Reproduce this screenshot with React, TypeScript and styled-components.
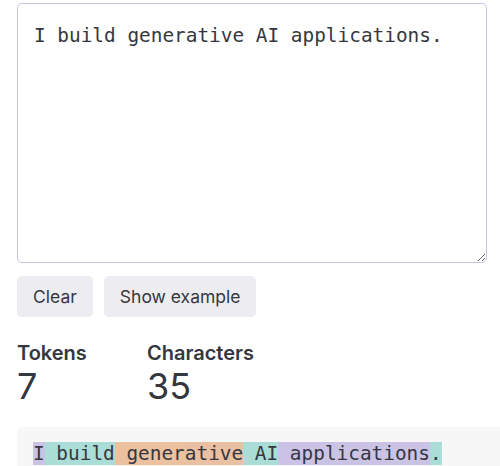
import React from "react";
import styled, { createGlobalStyle } from "styled-components";

const Global = createGlobalStyle`
  html, body { margin: 0; padding: 0; background: #ffffff; overflow: hidden; }
  body { font-family: "Inter", "Roboto", sans-serif; color: #353740; }
`;

const Page = styled.div`
  padding: 3px 0 0 17px;
`;

const TextArea = styled.textarea`
  display: block;
  box-sizing: border-box;
  width: 470px;
  height: 260px;
  padding: 18px 16px;
  border: 1px solid #c6c3e6;
  border-radius: 5px;
  font-family: "DejaVu Sans Mono", "Liberation Mono", monospace;
  font-size: 19.4px;
  line-height: 28px;
  color: #353740;
  resize: vertical;
  outline: none;
  background: #fff;
`;

const Buttons = styled.div`
  display: flex;
  gap: 11px;
  margin-top: 13px;
`;

const Button = styled.button`
  height: 41px;
  padding: 0 16px;
  border: none;
  border-radius: 5px;
  background: #ececf1;
  color: #353740;
  font-family: "Inter", sans-serif;
  font-size: 17.5px;
  cursor: pointer;
`;

const Stats = styled.div`
  display: flex;
  margin-top: 24px;
`;

const Stat = styled.div<{ $w: number }>`
  display: flex;
  flex-direction: column;
  width: ${(p) => p.$w}px;
`;

const Label = styled.div`
  font-size: 20px;
  font-weight: 600;
  line-height: 24px;
  color: #353740;
`;

const Value = styled.div`
  font-size: 36px;
  font-weight: 400;
  line-height: 42px;
  color: #353740;
`;

const TokenBox = styled.div`
  margin-top: 20px;
  background: #f7f7f8;
  border-radius: 5px 0 0 5px;
  padding: 15px 16px 12px;
  font-family: "DejaVu Sans Mono", "Liberation Mono", monospace;
  font-size: 19.4px;
  line-height: 24px;
  white-space: pre;
  overflow: hidden;
`;

const Token = styled.span<{ $bg: string }>`
  background: ${(p) => p.$bg};
`;

const tokens: [string, string][] = [
  ["I", "#cbc3e6"],
  [" build", "#a9ddd5"],
  [" gener", "#ecc1a0"],
  ["ative", "#eac0a2"],
  [" AI", "#a9ddd5"],
  [" applications", "#cbc3e6"],
  [".", "#a9ddd5"],
];

export default function App() {
  return (
    <>
      <Global />
      <Page>
        <TextArea defaultValue="I build generative AI applications." />
        <Buttons>
          <Button>Clear</Button>
          <Button>Show example</Button>
        </Buttons>
        <Stats>
          <Stat $w={130}>
            <Label>Tokens</Label>
            <Value>7</Value>
          </Stat>
          <Stat $w={160}>
            <Label>Characters</Label>
            <Value>35</Value>
          </Stat>
        </Stats>
        <TokenBox>
          {tokens.map(([t, c], i) => (
            <Token key={i} $bg={c}>
              {t}
            </Token>
          ))}
        </TokenBox>
      </Page>
    </>
  );
}
